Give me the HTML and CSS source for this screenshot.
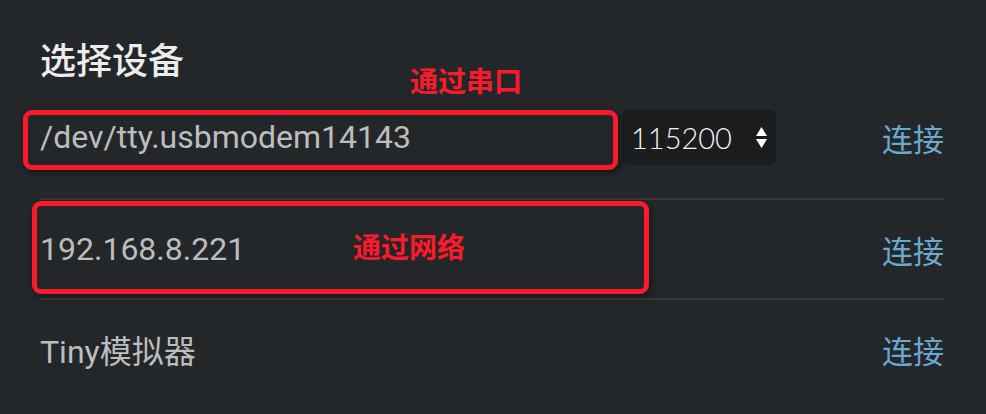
FILE: index.html
```html
<!DOCTYPE html>
<html lang="zh">
<head>
<meta charset="utf-8">
<title>选择设备</title>
<link rel="stylesheet" href="styles.css">
</head>
<body>
<div class="panel">
  <h2 class="title">选择设备</h2>
  <div class="row row-serial">
    <div class="field">/dev/tty.usbmodem14143</div>
    <div class="select">
      <span class="select-value">115200</span>
      <svg class="select-arrows" width="11" height="21" viewBox="0 0 11 21">
        <path d="M5.5 0 L11 9 L0 9 Z" fill="#ffffff"/>
        <path d="M0 12 L11 12 L5.5 21 Z" fill="#ffffff"/>
      </svg>
    </div>
    <a class="connect">连接</a>
  </div>
  <div class="row row-net">
    <div class="label">192.168.8.221</div>
    <a class="connect">连接</a>
  </div>
  <div class="row row-sim">
    <div class="label">Tiny模拟器</div>
    <a class="connect">连接</a>
  </div>

  <div class="mark mark-serial"></div>
  <div class="mark mark-net"></div>
  <div class="note note-serial">通过串口</div>
  <div class="note note-net">通过网络</div>
</div>
</body>
</html>
```
FILE: styles.css
```css
html, body {
  margin: 0;
  padding: 0;
  background: #24272a;
  height: 100%;
  overflow: hidden;
}

.panel {
  position: relative;
  padding: 39px 42px 0 40px;
  font-family: Roboto, "Noto Sans CJK SC", sans-serif;
  color: #bdbdbd;
}

.title {
  margin: 0;
  font-family: "Noto Sans CJK SC", sans-serif;
  font-weight: 500;
  font-size: 36px;
  line-height: 38px;
  color: #ececec;
}

.row {
  display: flex;
  align-items: center;
  border-bottom: 2px solid #35383b;
}

.row-serial {
  margin-top: 33px;
  height: 55px;
  padding-bottom: 33px;
}

.row-net {
  height: 98px;
}

.row-sim {
  height: 98px;
  border-bottom: none;
}

.field {
  width: 582px;
  font-size: 32px;
  line-height: 55px;
  color: #bdbdbd;
}

.select {
  display: flex;
  align-items: center;
  justify-content: space-between;
  width: 136px;
  height: 55px;
  padding: 0 9px 0 9px;
  background: #1b1c1e;
  border-radius: 6px;
}

.select-value {
  font-family: Lato, "Open Sans", Roboto, sans-serif;
  font-weight: 300;
  font-size: 29px;
  color: #f2f2f2;
}

.select-arrows {
  display: block;
}

.label {
  flex: 1;
  font-size: 32px;
  color: #bdbdbd;
}

.connect {
  margin-left: auto;
  font-family: "Noto Sans CJK SC", sans-serif;
  font-size: 31px;
  color: #6aa8d0;
  cursor: pointer;
}

.mark {
  position: absolute;
  border: 5px solid #fb1a2c;
  border-radius: 9px;
  box-shadow: 2px 3px 6px rgba(0, 0, 0, 0.45);
}

.mark-serial {
  left: 23px;
  top: 110px;
  width: 585px;
  height: 50px;
}

.mark-net {
  left: 32px;
  top: 201px;
  width: 607px;
  height: 83px;
}

.note {
  position: absolute;
  font-family: "Noto Sans CJK SC", sans-serif;
  font-weight: 700;
  font-size: 28px;
  line-height: 28px;
  color: #fb1a2c;
}

.note-serial {
  left: 410px;
  top: 66px;
}

.note-net {
  left: 353px;
  top: 232px;
}
```
